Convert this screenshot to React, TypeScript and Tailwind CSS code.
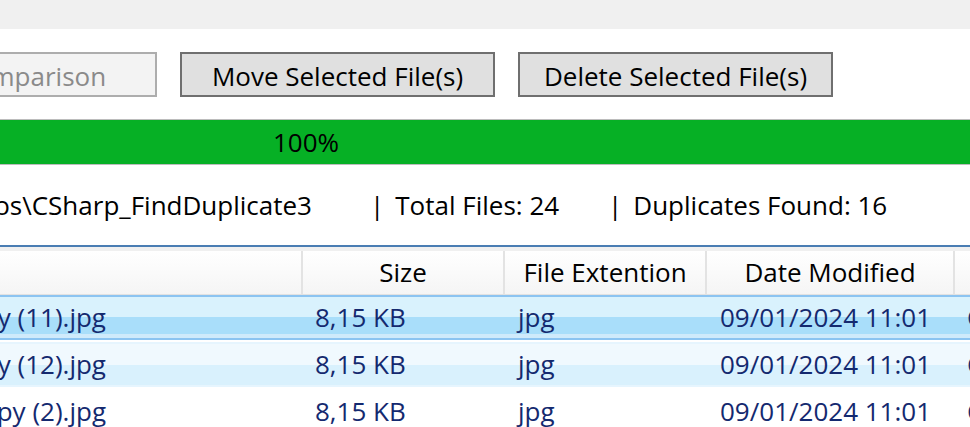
const rows = [
  { name: "image - Copy (11).jpg", size: "8,15 KB", ext: "jpg", date: "09/01/2024 11:01", state: "selected" },
  { name: "image - Copy (12).jpg", size: "8,15 KB", ext: "jpg", date: "09/01/2024 11:01", state: "hover" },
  { name: "image - Copy (2).jpg", size: "8,15 KB", ext: "jpg", date: "09/01/2024 11:01", state: "none" },
];

const rowStyle: Record<string, string> = {
  selected:
    "border-y-2 border-[#8cc4f1] bg-[linear-gradient(to_bottom,#d9f2fd_0%,#d9f2fd_48%,#a9defa_48%,#a9defa_90%,#cfeafb_90%)]",
  hover:
    "border-y-2 border-[#e6f5fe] bg-[linear-gradient(to_bottom,#f0f9fe_0%,#f0f9fe_50%,#d9f1fd_50%,#d9f1fd_100%)]",
  none: "border-y-2 border-white bg-white",
};

export default function App() {
  return (
    <div className="w-[970px] h-[427px] overflow-hidden bg-white font-['Open_Sans','Liberation_Sans',sans-serif] text-[26px] text-black">
      {/* title strip */}
      <div className="h-[29px] bg-[#f0f0f0]" />

      {/* action buttons */}
      <div className="mt-[23px] flex h-[45px] gap-[23px] whitespace-nowrap">
        <div className="ml-[-157px] flex w-[314px] shrink-0 items-center justify-center border-2 border-[#adadad] bg-[#f3f3f3] pt-[3px] text-[#8a8a8a]">
          Start Comparison
        </div>
        <button className="flex w-[315px] shrink-0 items-center justify-center border-2 border-[#6f6f6f] bg-[#e0e0e0] pt-[3px]">
          Move Selected File(s)
        </button>
        <button className="flex w-[315px] shrink-0 items-center justify-center border-2 border-[#6f6f6f] bg-[#e0e0e0] pt-[3px]">
          Delete Selected File(s)
        </button>
      </div>

      {/* progress */}
      <div className="mt-[22px] flex h-[46px] items-center border-y border-[#bcbcbc] bg-[#06b025] pl-[273px] leading-none">
        100%
      </div>

      {/* status */}
      <div className="mt-[22px] flex h-[36px] items-center whitespace-nowrap">
        <div className="flex w-[370px] shrink-0 justify-end overflow-hidden pr-[58px]">
          C:\Users\Admin\source\repos\CSharp_FindDuplicate3
        </div>
        <div className="w-[238px] shrink-0">
          |<span className="ml-[11px]">Total Files: 24</span>
        </div>
        <div className="shrink-0">
          |<span className="ml-[11px]">Duplicates Found: 16</span>
        </div>
      </div>

      {/* list view */}
      <div className="mt-[22px] border-t-2 border-[#4a7db3]">
        <div className="h-[4px] bg-[#f0f0f0]" />
        <div className="flex h-[44px] items-stretch border-b border-[#e2e2e2] bg-[linear-gradient(to_bottom,#ffffff,#f5f5f5)] whitespace-nowrap">
          <div className="w-[303px] shrink-0 border-r-2 border-[#e3e3e3]" />
          <div className="flex w-[202px] shrink-0 items-center justify-center border-r-2 border-[#e3e3e3]">Size</div>
          <div className="flex w-[202px] shrink-0 items-center justify-center border-r-2 border-[#e3e3e3]">File Extention</div>
          <div className="flex w-[248px] shrink-0 items-center justify-center border-r-2 border-[#e3e3e3]">Date Modified</div>
          <div className="flex-1" />
        </div>

        {rows.map((r) => (
          <div key={r.name} className="h-[47px] pb-[2px]">
            <div className={`flex h-[45px] items-center whitespace-nowrap text-[#14296f] ${rowStyle[r.state]}`}>
              <div className="flex w-[303px] shrink-0 justify-end overflow-hidden pr-[197px]">{r.name}</div>
              <div className="w-[202px] shrink-0 pl-[12px]">{r.size}</div>
              <div className="w-[202px] shrink-0 pl-[13px]">{r.ext}</div>
              <div className="w-[248px] shrink-0 pl-[13px]">{r.date}</div>
              <div className="flex-1 overflow-hidden pl-[12px]">C:\Users</div>
            </div>
          </div>
        ))}
      </div>
    </div>
  );
}
